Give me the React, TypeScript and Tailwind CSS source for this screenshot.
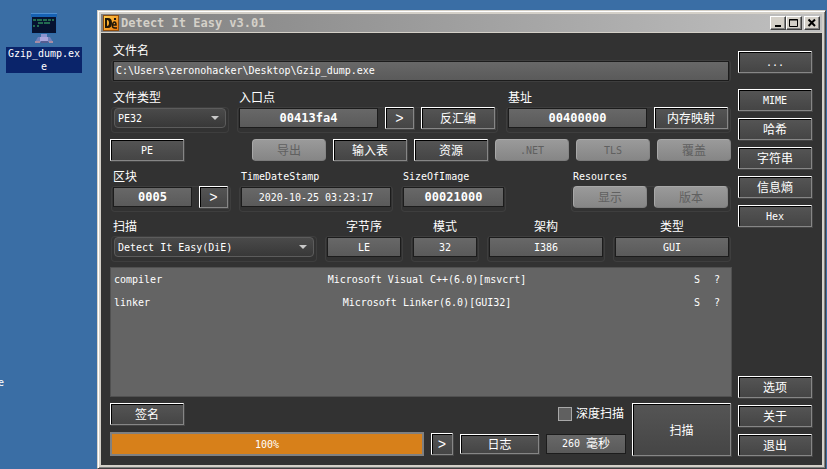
import type { ButtonHTMLAttributes, ReactNode } from "react";
import { clsx } from "clsx";

const CJK = "font-['DejaVu_Sans_Mono','Noto_Sans_CJK_SC',monospace] text-[12px]";

function Push({ className, children, disabled, ...rest }: ButtonHTMLAttributes<HTMLButtonElement>) {
  return (
    <button
      type="button"
      disabled={disabled}
      className={clsx(
        "flex shrink-0 items-center justify-center pt-0.5 whitespace-nowrap leading-none",
        disabled
          ? "rounded-sm border border-[#a8a8a8] border-r-[#858585] border-b-[#7c7c7c] bg-linear-to-b from-[#9a9a9a] to-[#868686] text-[#606060]"
          : "border border-t-white border-l-white border-r-[#868686] border-b-[#868686] bg-linear-to-b from-[#555555] to-[#454545] shadow-[inset_1px_1px_0_#000,1px_1px_0_#454545]",
        className,
      )}
      {...rest}
    >
      {children}
    </button>
  );
}

const wide = "h-[22px] w-[74px]";
const small = "text-[10px]";
const arrow = "font-['Liberation_Mono',monospace] text-[14px]";

function Group({ label, id, center, latin, flat, children }: {
  label: string;
  id?: string;
  center?: boolean;
  latin?: boolean;
  flat?: boolean;
  children: ReactNode;
}) {
  return (
    <div className="flex min-w-0 flex-col">
      <label
        htmlFor={id}
        className={clsx("h-5 px-0.5 pt-px leading-5", center && "text-center", latin && small)}
      >
        {label}
      </label>
      <div
        className={clsx(
          "flex items-center gap-[7px] rounded-sm px-0.5 shadow-[inset_0_0_0_1px_#3e3e3e] has-[button]:pr-[3px]",
          flat ? "pb-0" : "pb-1",
        )}
      >
        {children}
      </div>
    </div>
  );
}

const fieldBox =
  "h-5 w-full min-w-0 border border-[#1c1c1c] bg-linear-to-b from-[#686868] to-[#5a5a5a] leading-[18px] outline-none";

function Field({ id, value, bold }: { id: string; value: string; bold?: boolean }) {
  return (
    <div className="flex h-[22px] min-w-0 flex-1 items-center">
      <input
        id={id}
        readOnly
        value={value}
        className={clsx(fieldBox, "text-center", bold ? "text-[12px] font-bold" : "text-[10px]")}
      />
    </div>
  );
}

function PathField({ id, value }: { id: string; value: string }) {
  return (
    <div className="flex h-[22px] min-w-0 flex-1 items-center">
      <textarea
        id={id}
        readOnly
        rows={1}
        value={value}
        className={clsx(fieldBox, "resize-none overflow-hidden px-0.5 text-[10px] whitespace-nowrap")}
      />
    </div>
  );
}

function Combo({ id, value }: { id: string; value: string }) {
  return (
    <div className="relative flex h-[22px] min-w-0 flex-1 items-center px-px">
      <select
        id={id}
        className="h-5 w-full appearance-none rounded-sm border border-[#5c5c5c] bg-linear-to-b from-[#4a4a4a] to-[#383838] px-[3px] text-[10px] outline-none"
      >
        <option>{value}</option>
      </select>
      <svg className="pointer-events-none absolute top-[9px] right-2 h-1 w-2" viewBox="0 0 8 4">
        <path d="M0 0H8L4 4Z" fill="#c8c8c8" />
      </svg>
    </div>
  );
}

function DesktopIcon() {
  return (
    <div className="absolute top-3 left-1.5 flex w-[76px] flex-col items-center">
      <svg width="28" height="34" viewBox="0 0 28 34">
        <rect x="1" y="1" width="26" height="21" fill="#2f6caa" />
        <path d="M1 1H27V5H1Z" fill="#1762b4" />
        <path d="M1 1H27V2H1Z" fill="#4e8ed0" />
        <rect x="2" y="5" width="24" height="16" fill="#061230" />
        <path
          d="M3 8H6M7 8H12M13 8H17M18 8H21M22 8H24M8 11H13M14 11H20M3 14H5M7 14H9"
          stroke="#236b50"
          strokeWidth="2"
        />
        <path d="M11 22H17V25H11Z" fill="#8c93cf" />
        <path d="M8 25H20L23 30H5Z" fill="#7280bb" />
        <path d="M10 25H18V29H10Z" fill="#a9a5dc" />
        <path d="M5 29H10V31H5ZM19 29H23V31H19Z" fill="#a68ca5" />
        <path d="M11 29H18V31H11Z" fill="#555d91" />
      </svg>
      <span className="mt-px w-full bg-[#0a246a] px-px text-center text-[10px] leading-[13px] break-all">
        Gzip_dump.exe
      </span>
    </div>
  );
}

function AppLogo() {
  return (
    <svg width="16" height="16" viewBox="0 0 16 16" className="shrink-0">
      <defs>
        <linearGradient id="logo" x2="1" y2="1">
          <stop stopColor="#ffcf4c" />
          <stop offset="1" stopColor="#ee780d" />
        </linearGradient>
      </defs>
      <rect width="16" height="16" fill="#8e4d0d" />
      <rect x="1" y="1" width="14" height="14" fill="url(#logo)" />
      <path d="M2 3H5Q9 3 9 8T5 13H2ZM4 5V11Q6 11 6 8T4 5Z" fill="#201608" fillRule="evenodd" />
      <path d="M11 3H13V5H11Z" fill="#201608" />
      <path d="M10 10H13Q13 7 11.500 7T9.500 10T12 13H14" fill="none" stroke="#201608" strokeWidth="1.500" />
    </svg>
  );
}

function Caption({ name, children }: { name: string; children: ReactNode }) {
  return (
    <button
      type="button"
      aria-label={name}
      className="flex h-3.5 w-4 items-center justify-center border border-t-white border-l-white border-r-[#404040] border-b-[#404040] bg-[#d4d0c8] shadow-[inset_-1px_-1px_0_#808080]"
    >
      <svg width="12" height="10" viewBox="0 0 12 10" fill="none" stroke="#000">
        {children}
      </svg>
    </button>
  );
}

const results = [
  ["compiler", "Microsoft Visual C++(6.0)[msvcrt]"],
  ["linker", "Microsoft Linker(6.0)[GUI32]"],
];

export default function App() {
  return (
    <div className={clsx("relative flex min-h-screen overflow-hidden bg-[#3a6ea5] pt-2.5 pr-px pl-[97px] text-white", CJK)}>
      <DesktopIcon />
      <span className="absolute top-[376px] -left-0.5 text-[10px] leading-[13px]">e</span>

      <div className="flex min-w-0 flex-1 flex-col border border-t-[#d4d0c8] border-l-[#d4d0c8] border-r-[#404040] border-b-[#404040] bg-[#d4d0c8] p-[3px] shadow-[inset_1px_1px_0_#fff,inset_-1px_-1px_0_#808080]">
        <header className="flex h-[18px] items-center gap-0.5 bg-linear-to-r from-[#808080] to-[#c0c0c0] px-0.5">
          <AppLogo />
          <h1 className="flex-1 text-[12px] leading-none font-bold text-[#d4d0c8]">Detect It Easy v3.01</h1>
          <div className="flex">
            <Caption name="Minimize">
              <path d="M3 7.500H9M3 8.500H9" />
            </Caption>
            <Caption name="Maximize">
              <path d="M1.500 1.500H9.500V8.500H1.500ZM1 2H10" />
            </Caption>
          </div>
          <Caption name="Close">
            <path d="M2.500 1.500L9 8M9 1.500L2.500 8" strokeWidth="2" />
          </Caption>
        </header>

        <div className="mt-px flex flex-1 gap-1.5 bg-[#323232] pr-2.5 pb-[9px] pl-[9px]">
          <main className="flex min-w-0 flex-1 flex-col pt-[7px]">
            <div className="px-px">
              <Group label="文件名" id="file" flat>
                <PathField id="file" value="C:\Users\zeronohacker\Desktop\Gzip_dump.exe" />
              </Group>
            </div>

            <div className="mt-[5px] grid grid-cols-[118fr_261fr_225fr] gap-2 px-px">
              <Group label="文件类型" id="type">
                <Combo id="type" value="PE32" />
              </Group>
              <Group label="入口点" id="entry">
                <Field id="entry" bold value="00413fa4" />
                <Push className={clsx(arrow, "h-[22px] w-[29px]")}>&gt;</Push>
                <Push className={wide}>反汇编</Push>
              </Group>
              <Group label="基址" id="base">
                <Field id="base" bold value="00400000" />
                <Push className={wide}>内存映射</Push>
              </Group>
            </div>

            <div className="mt-1.5 flex gap-[7px] pr-px">
              <Push className={clsx(wide, small, "mr-auto")}>PE</Push>
              <Push className={wide} disabled>导出</Push>
              <Push className={wide}>输入表</Push>
              <Push className={wide}>资源</Push>
              <Push className={clsx(wide, small)} disabled>.NET</Push>
              <Push className={clsx(wide, small)} disabled>TLS</Push>
              <Push className={wide} disabled>覆盖</Push>
            </div>

            <div className="mt-[5px] grid grid-cols-[120fr_154fr_105fr_49fr_160fr] gap-2 px-px">
              <Group label="区块" id="sections">
                <Field id="sections" bold value="0005" />
                <Push className={clsx(arrow, "h-[22px] w-[29px]")}>&gt;</Push>
              </Group>
              <Group label="TimeDateStamp" id="stamp" latin>
                <Field id="stamp" value="2020-10-25 03:23:17" />
              </Group>
              <Group label="SizeOfImage" id="size" latin>
                <Field id="size" bold value="00021000" />
              </Group>
              <div className="col-start-5">
                <Group label="Resources" latin>
                  <Push className="h-[22px] flex-1" disabled>显示</Push>
                  <Push className="h-[22px] flex-1" disabled>版本</Push>
                </Group>
              </div>
            </div>

            <div className="mt-1 grid grid-cols-[206fr_78fr_68fr_118fr_118fr] gap-2 px-px">
              <Group label="扫描" id="engine">
                <Combo id="engine" value="Detect It Easy(DiE)" />
              </Group>
              <Group label="字节序" id="endian" center>
                <Field id="endian" value="LE" />
              </Group>
              <Group label="模式" id="mode" center>
                <Field id="mode" value="32" />
              </Group>
              <Group label="架构" id="arch" center>
                <Field id="arch" value="I386" />
              </Group>
              <Group label="类型" id="kind" center>
                <Field id="kind" value="GUI" />
              </Group>
            </div>

            <div className="mt-[5px] flex-1 border border-[#505050] bg-[#646464] pr-1">
              <table className="w-full table-fixed text-[10px]">
                <colgroup>
                  <col className="w-14" />
                  <col />
                  <col className="w-5" />
                  <col className="w-5" />
                </colgroup>
                <tbody>
                  {results.map(([kind, text]) => (
                    <tr key={kind} className="h-[23px]">
                      <td className="pl-[3px]">{kind}</td>
                      <td className="text-center">{text}</td>
                      <td className="text-center">S</td>
                      <td className="text-center">?</td>
                    </tr>
                  ))}
                </tbody>
              </table>
            </div>

            <div className="mt-1.5 flex gap-1.5 pr-px">
              <div className="flex min-w-0 flex-1 flex-col gap-[7px]">
                <div className="flex items-center justify-between">
                  <Push className={wide}>签名</Push>
                  <label className="flex items-center gap-1 pr-0.5 leading-none">
                    <input
                      type="checkbox"
                      className="size-3.5 appearance-none border border-[#a8a8a8] bg-[#606060]"
                    />
                    深度扫描
                  </label>
                </div>
                <div className="flex items-center gap-[7px]">
                  <div
                    role="progressbar"
                    aria-valuenow={100}
                    className="flex h-6 flex-1 items-center justify-center border-2 border-[#808080] bg-[#d7801a] text-[10px]"
                  >
                    100%
                  </div>
                  <Push className={clsx(arrow, "size-[22px]")}>&gt;</Push>
                  <Push className="h-5 w-[79px]">日志</Push>
                  <div className="flex h-5 w-20 items-center justify-center border border-[#1c1c1c] bg-linear-to-b from-[#686868] to-[#5a5a5a] leading-none">
                    <output className="flex items-center gap-1.5">
                      <span className={small}>260</span>
                      <span>毫秒</span>
                    </output>
                  </div>
                </div>
              </div>
              <Push className="w-[99px]">扫描</Push>
            </div>
          </main>

          <aside className="flex w-[74px] shrink-0 flex-col gap-[7px] pt-[18px]">
            <Push className={clsx(wide, small)}>...</Push>
            <Push className={clsx(wide, small, "mt-[9px]")}>MIME</Push>
            <Push className={wide}>哈希</Push>
            <Push className={wide}>字符串</Push>
            <Push className={wide}>信息熵</Push>
            <Push className={clsx(wide, small)}>Hex</Push>
            <Push className={clsx(wide, "mt-auto")}>选项</Push>
            <Push className={wide}>关于</Push>
            <Push className={wide}>退出</Push>
          </aside>
        </div>
      </div>
    </div>
  );
}
